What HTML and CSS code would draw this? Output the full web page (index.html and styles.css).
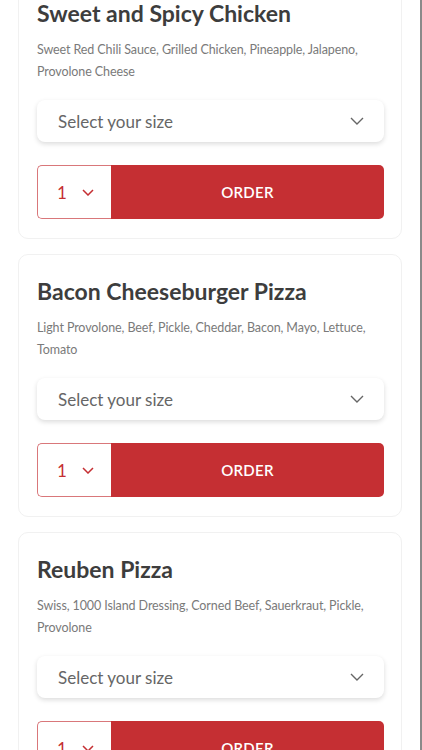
FILE: index.html
```html
<!DOCTYPE html>
<html lang="en">
<head>
    <meta charset="UTF-8">
    <meta name="viewport" content="width=device-width, initial-scale=1.0">
    <title>Menu</title>
    <link rel="stylesheet" href="styles.css">
</head>

<body>
    <div class="menu-list">
        <div class="menu-card">
            <h2>Sweet and Spicy Chicken</h2>
            <p class="desc">Sweet Red Chili Sauce, Grilled Chicken, Pineapple, Jalapeno, Provolone Cheese</p>
            <div class="size-select">
                <span>Select your size</span>
                <svg width="14" height="8" viewBox="0 0 14 8"><path d="M1 1l6 6 6-6" fill="none" stroke="#666" stroke-width="1.4"/></svg>
            </div>
            <div class="order-row">
                <div class="qty">
                    <span>1</span>
                    <svg width="12" height="7" viewBox="0 0 12 7"><path d="M1 1l5 5 5-5" fill="none" stroke="#c52f33" stroke-width="1.5"/></svg>
                </div>
                <button class="order-btn">ORDER</button>
            </div>
        </div>

        <div class="menu-card">
            <h2>Bacon Cheeseburger Pizza</h2>
            <p class="desc">Light Provolone, Beef, Pickle, Cheddar, Bacon, Mayo, Lettuce, Tomato</p>
            <div class="size-select">
                <span>Select your size</span>
                <svg width="14" height="8" viewBox="0 0 14 8"><path d="M1 1l6 6 6-6" fill="none" stroke="#666" stroke-width="1.4"/></svg>
            </div>
            <div class="order-row">
                <div class="qty">
                    <span>1</span>
                    <svg width="12" height="7" viewBox="0 0 12 7"><path d="M1 1l5 5 5-5" fill="none" stroke="#c52f33" stroke-width="1.5"/></svg>
                </div>
                <button class="order-btn">ORDER</button>
            </div>
        </div>

        <div class="menu-card">
            <h2>Reuben Pizza</h2>
            <p class="desc">Swiss, 1000 Island Dressing, Corned Beef, Sauerkraut, Pickle, Provolone</p>
            <div class="size-select">
                <span>Select your size</span>
                <svg width="14" height="8" viewBox="0 0 14 8"><path d="M1 1l6 6 6-6" fill="none" stroke="#666" stroke-width="1.4"/></svg>
            </div>
            <div class="order-row">
                <div class="qty">
                    <span>1</span>
                    <svg width="12" height="7" viewBox="0 0 12 7"><path d="M1 1l5 5 5-5" fill="none" stroke="#c52f33" stroke-width="1.5"/></svg>
                </div>
                <button class="order-btn">ORDER</button>
            </div>
        </div>
    </div>
</body>
</html>
```

FILE: styles.css
```css
* {
   box-sizing: border-box;
   font-family: 'Lato', 'Noto Sans', sans-serif;
}

body {
   margin: 0;
   background-color: #fff;
   height: 750px;
   overflow: hidden;
   border-right: 2px solid #8a8a8a;
}

.menu-list {
   display: flex;
   flex-direction: column;
   gap: 15px;
   padding: 0 18px 0 18px;
   margin-top: -24px;
}

.menu-card {
   border: 1px solid #f1f1f1;
   border-radius: 10px;
   padding: 24px 17px 19px 18px;
}

h2 {
   margin: 0;
   font-size: 23px;
   font-weight: 700;
   color: #3d3d3d;
   line-height: 24px;
}

.desc {
   margin: 14px 0 17px;
   font-size: 12.5px;
   letter-spacing: -0.1px;
   line-height: 22px;
   color: #7a7a7a;
}

.size-select {
   display: flex;
   justify-content: space-between;
   align-items: center;
   height: 42px;
   padding: 0 20px 0 21px;
   background-color: #fff;
   border-radius: 8px;
   box-shadow: 0px 2px 5px rgba(0, 0, 0, 0.14);
   font-size: 17px;
   color: #666;
}

.order-row {
   display: flex;
   height: 54px;
   margin-top: 23px;
}

.qty {
   display: flex;
   align-items: center;
   gap: 15px;
   width: 74px;
   padding-left: 19px;
   border: 1px solid #d9777a;
   border-right: none;
   border-radius: 5px 0 0 5px;
   color: #c52f33;
   font-size: 17px;
}

.order-btn {
   flex: 1;
   border: none;
   border-radius: 0 5px 5px 0;
   background-color: #c52f33;
   color: #fff;
   font-size: 15px;
   font-weight: 600;
   letter-spacing: 0.3px;
}
```
